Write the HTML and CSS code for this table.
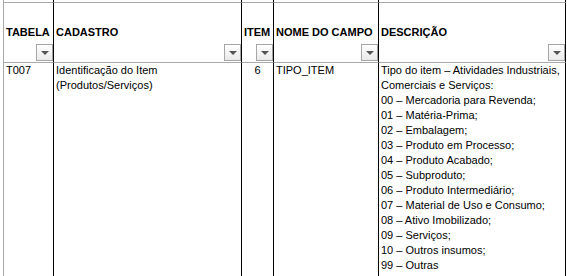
FILE: index.html
```html
<!DOCTYPE html>
<html lang="pt">
<head>
<meta charset="utf-8">
<title>Tabela</title>
<link rel="stylesheet" href="styles.css">
</head>
<body>
<div class="sheet">
  <div class="row stub">
    <div class="cell c1"></div><div class="cell"></div><div class="cell"></div><div class="cell"></div><div class="cell"></div>
  </div>
  <div class="row head">
    <div class="cell c1 hcell"><span>TABELA</span><span class="filter"></span></div>
    <div class="cell hcell"><span>CADASTRO</span><span class="filter"></span></div>
    <div class="cell hcell"><span>ITEM</span><span class="filter"></span></div>
    <div class="cell hcell"><span>NOME DO CAMPO</span><span class="filter"></span></div>
    <div class="cell hcell"><span>DESCRIÇÃO</span><span class="filter"></span></div>
  </div>
  <div class="row body">
    <div class="cell c1 bcell">T007</div>
    <div class="cell bcell">Identificação do Item<br>(Produtos/Serviços)</div>
    <div class="cell bcell center">6</div>
    <div class="cell bcell">TIPO_ITEM</div>
    <div class="cell bcell">Tipo do item – Atividades Industriais,<br>Comerciais e Serviços:<br>00 – Mercadoria para Revenda;<br>01 – Matéria-Prima;<br>02 – Embalagem;<br>03 – Produto em Processo;<br>04 – Produto Acabado;<br>05 – Subproduto;<br>06 – Produto Intermediário;<br>07 – Material de Uso e Consumo;<br>08 – Ativo Imobilizado;<br>09 – Serviços;<br>10 – Outros insumos;<br>99 – Outras</div>
  </div>
</div>
</body>
</html>
```
FILE: styles.css
```css
html, body {
  margin: 0;
  padding: 0;
  overflow: hidden;
  background: #fff;
}
body {
  font-family: "Liberation Sans", Arial, sans-serif;
  font-size: 11px;
  color: #000;
}
.sheet {
  margin-left: 3px;
  width: 563px;
}
.row {
  display: grid;
  grid-template-columns: 51px 188px 32px 105px 187px;
}
.cell {
  box-sizing: border-box;
  border-right: 1px solid #000;
}
.c1 {
  border-left: 1px solid #a9a9a9;
}
.stub .cell {
  height: 2px;
}
.head .cell {
  height: 61px;
  border-top: 1px solid #a9a9a9;
  border-bottom: 1px solid #a9a9a9;
}
.hcell {
  position: relative;
  font-weight: bold;
  line-height: 15px;
  padding: 22px 2px 0 2px;
  white-space: nowrap;
}
.filter {
  position: absolute;
  right: 0;
  bottom: 1px;
  width: 17px;
  height: 17px;
  box-sizing: border-box;
  border: 1px solid #a6a6a6;
  background: linear-gradient(#ffffff, #e9e9e9);
}
.filter::after {
  content: "";
  position: absolute;
  left: 4px;
  top: 6px;
  border-left: 4px solid transparent;
  border-right: 4px solid transparent;
  border-top: 4px solid #555;
}
.bcell {
  line-height: 15px;
  padding: 0 2px;
  white-space: nowrap;
  height: 213px;
}
.center {
  text-align: center;
}
```
